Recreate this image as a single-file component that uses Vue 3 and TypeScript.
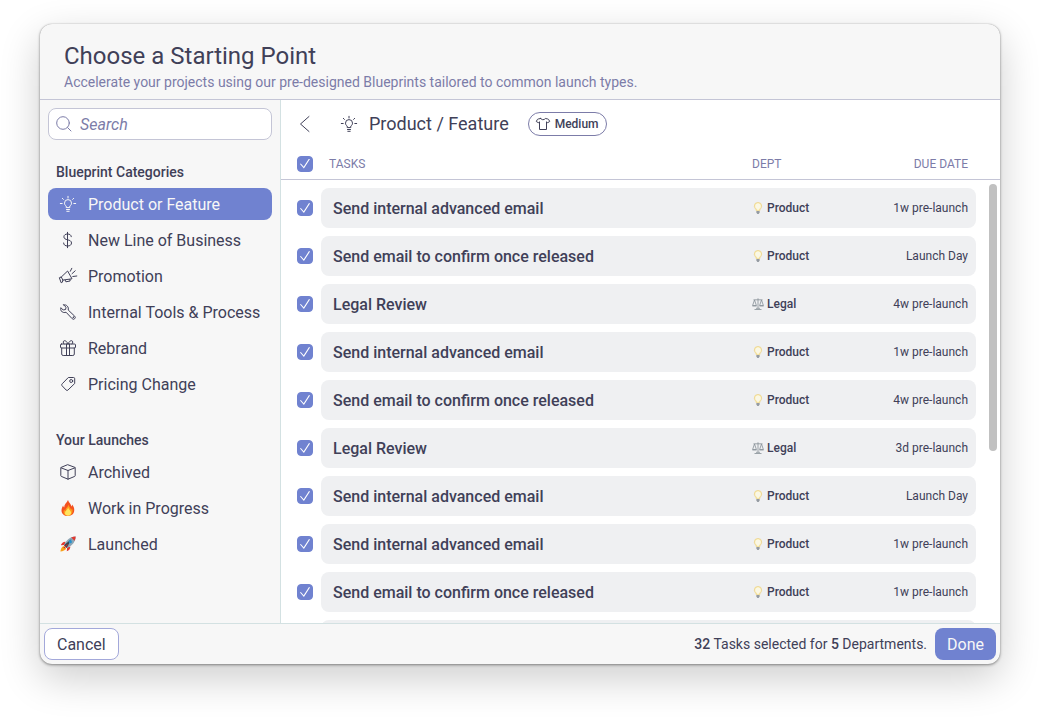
<script setup lang="ts">
import { computed, onBeforeUnmount, onMounted, ref } from 'vue'

type IconName = 'bulb' | 'dollar' | 'megaphone' | 'wrench' | 'gift' | 'tag' | 'box' | 'fire' | 'rocket'

interface NavItem {
  label: string
  icon: IconName
}

interface Task {
  name: string
  dept: 'Product' | 'Legal'
  due: string
  checked: boolean
}

const categories: NavItem[] = [
  { label: 'Product or Feature', icon: 'bulb' },
  { label: 'New Line of Business', icon: 'dollar' },
  { label: 'Promotion', icon: 'megaphone' },
  { label: 'Internal Tools & Process', icon: 'wrench' },
  { label: 'Rebrand', icon: 'gift' },
  { label: 'Pricing Change', icon: 'tag' },
]

const launches: NavItem[] = [
  { label: 'Archived', icon: 'box' },
  { label: 'Work in Progress', icon: 'fire' },
  { label: 'Launched', icon: 'rocket' },
]

const groups = [
  { title: 'Blueprint Categories', items: categories },
  { title: 'Your Launches', items: launches },
]

const names = ['Send internal advanced email', 'Send email to confirm once released', 'Legal Review']
const order = [0, 1, 2, 0, 1, 2, 0, 0, 1, 2, 0, 1, 2, 0, 1]
const dues = ['1w', '', '4w', '1w', '4w', '3d', '', '1w', '1w', '4w', '1w', '', '4w', '1w', '3d']

const tasks = ref<Task[]>(
  order.map((n, i) => ({
    name: names[n],
    dept: n === 2 ? 'Legal' : 'Product',
    due: dues[i] ? `${dues[i]} pre-launch` : 'Launch Day',
    checked: true,
  })),
)

const selected = ref('Product or Feature')
const query = ref('')

const allChecked = computed({
  get: () => tasks.value.every((t) => t.checked),
  set: (value: boolean) => tasks.value.forEach((t) => (t.checked = value)),
})

const list = ref<HTMLElement | null>(null)
const thumb = ref({ top: 0, size: 100 })

function syncThumb() {
  const el = list.value
  if (!el) return
  thumb.value = {
    top: (el.scrollTop / el.scrollHeight) * 100,
    size: (el.clientHeight / el.scrollHeight) * 100,
  }
}

onMounted(() => {
  syncThumb()
  window.addEventListener('resize', syncThumb)
})

onBeforeUnmount(() => window.removeEventListener('resize', syncThumb))
</script>

<template>
  <div class="page">
    <section class="dialog" role="dialog" aria-labelledby="dialog-title">
      <header class="head">
        <h1 id="dialog-title">Choose a Starting Point</h1>
        <p>Accelerate your projects using our pre-designed Blueprints tailored to common launch types.</p>
      </header>

      <div class="body">
        <aside class="sidebar">
          <label class="search">
            <svg viewBox="0 0 16 16" class="icon" aria-hidden="true">
              <circle cx="7" cy="7" r="6.3" />
              <path d="M11.6 11.6 15 15" />
            </svg>
            <input v-model="query" type="search" placeholder="Search" aria-label="Search" />
          </label>

          <nav v-for="group in groups" :key="group.title" :aria-label="group.title">
            <h2>{{ group.title }}</h2>
            <button
              v-for="item in group.items"
              :key="item.label"
              type="button"
              class="nav-item"
              :class="{ active: item.label === selected }"
              @click="selected = item.label"
            >
              <svg viewBox="0 0 16 16" class="icon" aria-hidden="true">
                <template v-if="item.icon === 'bulb'">
                  <path d="M6.2 11.2V10C5 9.3 4.5 8.3 4.5 7.1a3.5 3.5 0 0 1 7 0c0 1.2-.5 2.2-1.7 2.9v1.2zM6.5 13.5h3M6.8 15.3h2.4M8 .3v1.7M2.3 2.3l1.1 1.1M13.7 2.3l-1.1 1.1M.3 7.5h1.9M13.8 7.5h1.9" />
                </template>
                <template v-else-if="item.icon === 'dollar'">
                  <path d="M7.5.3v15.4M11.3 4.7C11.2 3 9.7 2 7.6 2S3.9 3 3.9 4.8c0 1.9 1.6 2.5 3.7 3s3.9 1.2 3.9 3.2c0 1.9-1.6 3-3.9 3s-4-1.1-4-3" />
                </template>
                <template v-else-if="item.icon === 'megaphone'">
                  <path d="M-.3 9.6 1.3 9 7.6 3l4.4 7.8-9.2 1.3-.4 2.1-.9.4zM1.3 9l1.5 3.1M5.2 12.2l.7 1.6 4.2-.8-.2-1.6M10.3 3.3l1.500-3M12 5.700l3.200-2.900M12.800 8.500l4-.5" />
                </template>
                <template v-else-if="item.icon === 'wrench'">
                  <path d="M3.7.9 6 3.2 5.600 5.500 3.200 6 .9 3.700C.2 6 1.500 8.200 3.700 8.500c.8.1 1.600 0 2.300-.3l6.200 6.500a1.700 1.700 0 0 0 2.500-2.500L8.200 6c.8-2.800-1.500-5.900-4.500-5.100z" />
                  <circle cx="13.2" cy="13.2" r=".3" />
                </template>
                <template v-else-if="item.icon === 'gift'">
                  <path d="M1.500 4h13a1 1 0 0 1 1 1v2a1 1 0 0 1-1 1h-13a1 1 0 0 1-1-1V5a1 1 0 0 1 1-1zM1.700 8v6a1.500 1.500 0 0 0 1.500 1.500h9.600a1.500 1.500 0 0 0 1.500-1.500V8M6.500 4v11.500M9.500 4v11.500M8 4C7 1.500 5.500.5 4.300.7S2.700 2.800 4 4M8 4c1-2.500 2.500-3.500 3.700-3.300S13.300 2.800 12 4" />
                </template>
                <template v-else-if="item.icon === 'tag'">
                  <path d="M8.700 1.500h4.800a1.200 1.200 0 0 1 1.200 1.200v4.800l-6.800 6.600a1.200 1.200 0 0 1-1.700 0L2 9.700a1.200 1.200 0 0 1 0-1.700z" />
                  <circle cx="11.2" cy="5" r="1.500" />
                </template>
                <template v-else-if="item.icon === 'box'">
                  <path d="M8 .8 14.700 3.300a.8.8 0 0 1 .5.8v7.500a.8.8 0 0 1-.5.8L8 15.200l-6.700-2.800a.8.8 0 0 1-.5-.8V4.100a.8.8 0 0 1 .5-.8zM1 3.800l7 2.700 7-2.700M8 6.500v8.700" />
                </template>
                <g v-else-if="item.icon === 'fire'" stroke="none">
                  <path fill="#f4511f" d="M8 0c.6 2.500 3.200 4.200 3.600 6.600.4-.5.5-1.200.4-2 1.700 1.700 2.400 3.800 2.200 6C14 14 11.700 16 8 16s-6.500-2-6.500-5.500c0-2 .9-3.700 1.600-5 .2 1 .6 1.600 1.100 2C4 4.300 6.700 3 8 0z" />
                  <path fill="#ff9d1c" d="M8.500 4.500c.2 2 2.300 3.400 2.500 5.300.5-.3.9-.8 1-1.500 1.400 3.500.3 7.300-4 7.300s-5.200-3.300-3.900-6c.3.8.7 1.200 1.300 1.500C5 8 8 7.500 8.500 4.500z" />
                  <path fill="#ffe45e" d="M8.300 7.500c0 1.900 3 3.200 2.800 5.600-.2 1.700-1.500 2.600-3.100 2.600s-3-1-3-2.800c0-2.200 2.700-3.100 3.300-5.400z" />
                </g>
                <g v-else stroke="none">
                  <path fill="#f7a11b" d="M.4 15.600c.3-2.500 1.400-4.800 3.300-5.500l2.500 2.400c-.8 1.900-3.200 2.700-5.800 3.100z" />
                  <path fill="#e2382f" d="M5.600 5.700C3.500 5.400 1.600 7 .8 9.200l3.600-.3zM10.300 10.400c.3 2.100-1.300 4-3.500 4.800l.3-3.600z" />
                  <path fill="#8ea6b5" d="M15.600.4C11 .3 6.400 3.300 4 9.300L6.700 12C12.700 9.600 15.700 5 15.600.4z" />
                  <path fill="#33434f" d="m4 9.300 7.500-6.400L6.700 12z" />
                  <path fill="#e2382f" d="M15.600.4c-1.500 0-3 .3-4.400 1l3.400 3.400c.7-1.400 1-2.900 1-4.400z" />
                  <circle cx="10.3" cy="5.7" r="1.6" fill="#2492cf" />
                  <path fill="#c52b27" d="m3.400 11.800 3.700-3.700.8.8-3.700 3.700z" />
                </g>
              </svg>
              <span>{{ item.label }}</span>
            </button>
          </nav>
        </aside>

        <main class="main">
          <div class="toolbar">
            <button type="button" class="back" aria-label="Back">
              <svg viewBox="0 0 16 16" class="icon" aria-hidden="true"><path d="M12 .5 3.500 8l8.500 7.500" /></svg>
            </button>
            <svg viewBox="0 0 16 16" class="icon" aria-hidden="true">
              <path d="M6.2 11.2V10C5 9.3 4.5 8.3 4.5 7.1a3.5 3.5 0 0 1 7 0c0 1.2-.5 2.2-1.7 2.9v1.2zM6.5 13.5h3M6.8 15.3h2.4M8 .3v1.7M2.3 2.3l1.1 1.1M13.7 2.3l-1.1 1.1M.3 7.5h1.9M13.8 7.5h1.9" />
            </svg>
            <h2>Product / Feature</h2>
            <button type="button" class="size">
              <svg viewBox="0 0 14 14" class="icon shirt" aria-hidden="true">
                <path d="M4.700 1.500 2.500 1.900a2 2 0 0 0-1.400 1L.3 4.500l2 1.200 1.200-.9v7.700h7V4.800l1.200.9 2-1.200-.8-1.600a2 2 0 0 0-1.400-1l-2.200-.4c-.5.8-1.300 1.200-2.300 1.200s-1.800-.4-2.300-1.200z" />
              </svg>
              <span>Medium</span>
            </button>
          </div>

          <table>
            <thead>
              <tr>
                <th class="check"><input v-model="allChecked" type="checkbox" aria-label="Select all tasks" /></th>
                <th scope="col">TASKS</th>
                <th scope="col">DEPT</th>
                <th scope="col" class="due">DUE DATE</th>
              </tr>
            </thead>
            <tbody ref="list" @scroll="syncThumb">
              <tr v-for="(task, i) in tasks" :key="i">
                <td class="check"><input :id="`task-${i}`" v-model="task.checked" type="checkbox" /></td>
                <td class="name"><label :for="`task-${i}`">{{ task.name }}</label></td>
                <td class="dept">
                  <svg viewBox="0 0 12 12" aria-hidden="true">
                    <template v-if="task.dept === 'Product'">
                      <path fill="#ffe680" stroke="#e8bd4d" stroke-width=".6" d="M6 .4a3.7 3.7 0 0 0-3.7 3.7c0 1.9 1.700 2.700 2 4.700h3.400c.3-2 2-2.800 2-4.700A3.700 3.700 0 0 0 6 .4z" />
                      <path fill="#fffbe0" d="M6 1.200a2.900 2.900 0 0 0-2.500 4.200L6 8.400l2.500-3A2.900 2.900 0 0 0 6 1.200z" />
                      <path fill="#6e7780" d="M4.400 8.900h3.200v1.700L6.700 12H5.300l-.9-1.400z" />
                    </template>
                    <path
                      v-else
                      fill="none"
                      stroke="#58656f"
                      stroke-width=".8"
                      d="M6 .3v10M1.500 1.800h9M2.500 2 .6 7.500h3.800zM9.500 2 7.600 7.500h3.800zM.4 8h4.200M7.400 8h4.200M4 10.300h4M2.500 11.500h7"
                    />
                  </svg>
                  <span>{{ task.dept }}</span>
                </td>
                <td class="due">{{ task.due }}</td>
              </tr>
            </tbody>
          </table>
          <div class="track" aria-hidden="true">
            <div class="thumb" :style="{ top: `${thumb.top}%`, height: `${thumb.size}%` }"></div>
          </div>
        </main>
      </div>

      <footer class="foot">
        <button type="button" class="cancel">Cancel</button>
        <p><b>32</b> Tasks selected for <b>5</b> Departments.</p>
        <button type="button" class="done">Done</button>
      </footer>
    </section>
  </div>
</template>

<style>
body {
  margin: 0;
  background: #fff;
}
</style>

<style scoped>
* {
  box-sizing: border-box;
}

.page {
  height: 100vh;
  padding: 24px 40px 56px;
  font-family: Roboto, 'Liberation Sans', sans-serif;
  font-size: 16px;
  line-height: 24px;
  color: #404058;
}

h1,
h2,
p {
  margin: 0;
  font-weight: 400;
}

button,
input {
  font: inherit;
  color: inherit;
}

button {
  padding: 0;
  border: 0;
  background: none;
  white-space: nowrap;
  cursor: pointer;
}

.icon {
  flex: none;
  width: 16px;
  height: 16px;
  overflow: visible;
  fill: none;
  stroke: currentColor;
  stroke-width: 1;
  stroke-linecap: round;
  stroke-linejoin: round;
}

.dialog {
  display: flex;
  flex-direction: column;
  height: 100%;
  overflow: hidden;
  border-radius: 12px;
  background: #f7f7f7;
  box-shadow: 0 0 1px rgba(0, 0, 0, 0.3), 0 1px 3px rgba(0, 0, 0, 0.4), 0 14px 40px rgba(0, 0, 0, 0.2);
}

.head {
  padding: 16px 24px 6px;
  border-bottom: 1px solid #c4c5d6;
}

.head h1 {
  font-size: 24px;
  line-height: 32px;
}

.head p {
  font-size: 14px;
  line-height: 21px;
  color: #7c7ca8;
}

.body {
  display: flex;
  flex: 1;
  min-height: 0;
}

.sidebar {
  flex: none;
  width: 241px;
  padding: 8px;
  border-right: 1px solid #d3e1e2;
}

.search {
  display: flex;
  align-items: center;
  gap: 8px;
  height: 32px;
  padding: 0 7px;
  border: 1px solid #c4c5d6;
  border-radius: 8px;
  background: #fff;
  color: #7c7ca8;
}

.search input {
  flex: 1;
  min-width: 0;
  padding: 2px 0 0;
  border: 0;
  outline: 0;
  background: none;
}

.search input::placeholder {
  font-style: italic;
  color: #7c7ca8;
  opacity: 1;
}

nav {
  display: flex;
  flex-direction: column;
  gap: 4px;
  margin-top: 20px;
}

nav + nav {
  margin-top: 28px;
}

nav h2 {
  padding: 0 8px;
  font-size: 14px;
  line-height: 24px;
  font-weight: 500;
}

.nav-item {
  display: flex;
  align-items: center;
  gap: 12px;
  height: 32px;
  padding: 0 12px;
  border-radius: 8px;
  text-align: left;
}

.nav-item span {
  padding-top: 2px;
}

.nav-item.active {
  background: #7082d0;
  color: #f7f7f7;
}

.main {
  position: relative;
  display: flex;
  flex: 1;
  flex-direction: column;
  min-width: 0;
  background: #fff;
}

.toolbar {
  display: flex;
  flex: none;
  align-items: center;
  height: 48px;
  padding: 0 16px;
}

.back {
  display: flex;
  margin-right: 28px;
}

.toolbar h2 {
  margin: 0 19px 0 12px;
  font-size: 18px;
}

.size {
  display: flex;
  align-items: center;
  gap: 5px;
  height: 24px;
  padding: 0 7px;
  border: 1px solid #7c7ca8;
  border-radius: 12px;
  font-size: 12px;
  line-height: 16px;
  font-weight: 500;
}

.shirt {
  width: 14px;
  height: 14px;
}

table {
  display: flex;
  flex: 1;
  flex-direction: column;
  min-height: 0;
}

thead {
  display: block;
  flex: none;
  border-bottom: 1px solid #c4c5d6;
}

tbody {
  display: flex;
  flex: 1;
  flex-direction: column;
  gap: 8px;
  min-height: 0;
  padding: 8px 0;
  overflow-y: auto;
  scrollbar-width: none;
}

tr {
  display: grid;
  flex: none;
  grid-template-columns: 40px 1fr 112px 112px;
  padding-right: 24px;
}

th {
  height: 31px;
  padding: 1px 8px 0;
  font-size: 12px;
  line-height: 30px;
  font-weight: 400;
  text-align: left;
  color: #7c7ca8;
}

td {
  display: flex;
  align-items: center;
  height: 40px;
  padding: 0 8px;
  background: #eff0f2;
  font-size: 12px;
}

th.check,
td.check {
  display: flex;
  align-items: center;
  padding: 0 0 0 16px;
  background: none;
}

th:nth-child(3),
td.dept {
  padding-left: 0;
}

th.due {
  text-align: right;
}

td.name {
  padding: 2px 12px 0;
  border-radius: 8px 0 0 8px;
  font-size: 16px;
  font-weight: 500;
}

td.dept {
  gap: 3px;
  font-weight: 500;
}

td.dept svg {
  width: 12px;
  height: 12px;
  opacity: 0.7;
}

td.due {
  justify-content: flex-end;
  border-radius: 0 8px 8px 0;
}

input[type='checkbox'] {
  appearance: none;
  display: grid;
  place-items: center;
  width: 16px;
  height: 16px;
  margin: 0;
  border: 1px solid #7082d0;
  border-radius: 4px;
  background: #fff;
}

input[type='checkbox']:checked {
  background: #7082d0;
}

input[type='checkbox']:checked::before {
  content: '';
  width: 10px;
  height: 10px;
  background: #fff;
  clip-path: polygon(0 56%, 8% 49%, 37% 83%, 90% 0, 100% 6%, 39% 100%);
}

.track {
  position: absolute;
  top: 84px;
  right: 3px;
  bottom: 0;
  width: 8px;
}

.thumb {
  position: absolute;
  width: 100%;
  border-radius: 4px;
  background: #c1c1c1;
}

.foot {
  display: flex;
  flex: none;
  align-items: center;
  gap: 8px;
  padding: 4px;
  border-top: 1px solid #d3e1e2;
}

.foot p {
  margin-left: auto;
  font-size: 14px;
}

.foot b {
  font-weight: 500;
}

.cancel,
.done {
  height: 32px;
  padding: 2px 12px 0;
  border-radius: 8px;
}

.cancel {
  border: 1px solid #a3a8da;
  background: #fff;
}

.done {
  background: #7082d0;
  color: #f7f7f7;
}
</style>
